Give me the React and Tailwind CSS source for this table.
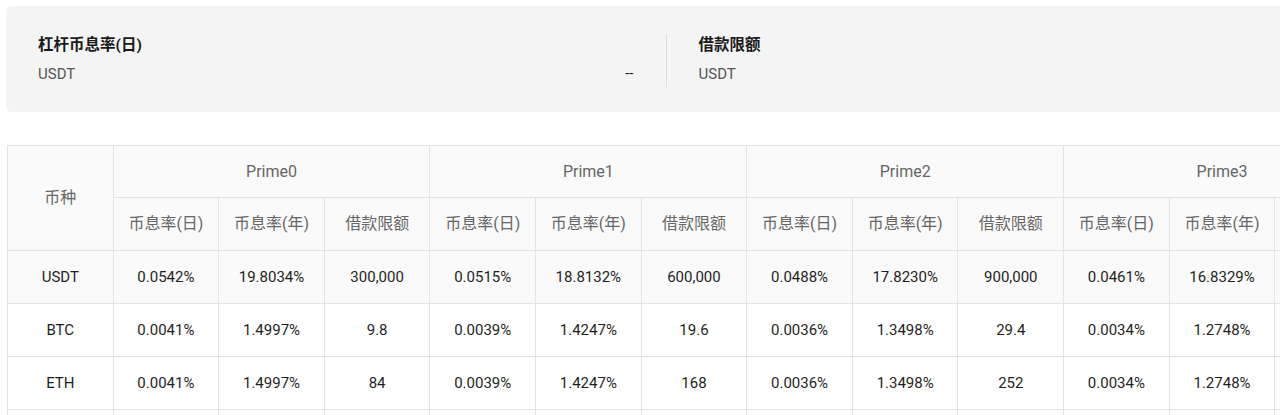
import React from "react";

const primes = [
  { name: "Prime0", rows: [["0.0542%", "19.8034%", "300,000"], ["0.0041%", "1.4997%", "9.8"], ["0.0041%", "1.4997%", "84"], ["0.0041%", "1.4997%", "3,000"]] },
  { name: "Prime1", rows: [["0.0515%", "18.8132%", "600,000"], ["0.0039%", "1.4247%", "19.6"], ["0.0039%", "1.4247%", "168"], ["0.0039%", "1.4247%", "6,000"]] },
  { name: "Prime2", rows: [["0.0488%", "17.8230%", "900,000"], ["0.0036%", "1.3498%", "29.4"], ["0.0036%", "1.3498%", "252"], ["0.0036%", "1.3498%", "9,000"]] },
  { name: "Prime3", rows: [["0.0461%", "16.8329%", "1,200,000"], ["0.0034%", "1.2748%", "39.2"], ["0.0034%", "1.2748%", "336"], ["0.0034%", "1.2748%", "12,000"]] },
];

const coins = ["USDT", "BTC", "ETH", "USDC"];

const App = () => {
  return (
    <div
      className="w-[1280px] h-[415px] overflow-hidden bg-white"
      style={{ fontFamily: 'Roboto, "Noto Sans CJK SC", sans-serif' }}
    >
      {/* summary box */}
      <div className="ml-[6px] mt-[6px] w-[1320px] h-[106px] bg-[#f4f4f4] rounded-md flex items-center px-8">
        <div className="flex-1 flex items-end">
          <div className="flex-1">
            <div className="text-[15.5px] leading-5 font-bold text-[#1a1a1a]">杠杆币息率(日)</div>
            <div className="text-[15px] leading-5 text-[#555] mt-[9px]">USDT</div>
          </div>
          <div className="text-[15px] leading-5 text-[#222] pb-[1px]">--</div>
        </div>
        <div className="w-px h-[53px] bg-[#dcdcdc] mx-8 self-center mt-[2px]" />
        <div className="flex-1">
          <div className="text-[15.5px] leading-5 font-bold text-[#1a1a1a]">借款限额</div>
          <div className="text-[15px] leading-5 text-[#555] mt-[9px]">USDT</div>
        </div>
      </div>

      {/* rate table */}
      <div className="ml-[7px] mt-[33px]">
        <table className="table-fixed w-[1374px] border-collapse text-[15px] text-center">
          <thead className="bg-[#fafafa] text-[#666] text-[16px]">
            <tr className="h-[52px]">
              <th rowSpan={2} className="font-normal border border-[#e3e3e3]">币种</th>
              {primes.map((p) => (
                <th key={p.name} colSpan={3} className="font-normal border border-[#e3e3e3]">
                  {p.name}
                </th>
              ))}
            </tr>
            <tr className="h-[53px]">
              {primes.map((p) => (
                <React.Fragment key={p.name}>
                  <th className="font-normal border border-[#e3e3e3]">币息率(日)</th>
                  <th className="font-normal border border-[#e3e3e3]">币息率(年)</th>
                  <th className="font-normal border border-[#e3e3e3]">借款限额</th>
                </React.Fragment>
              ))}
            </tr>
          </thead>
          <tbody className="text-[#1f1f1f]">
            {coins.map((c, i) => (
              <tr key={c} className={`h-[53px] ${i === 0 ? "bg-[#fafafa]" : "bg-white"}`}>
                <td className="border border-[#e3e3e3]">{c}</td>
                {primes.map((p) =>
                  p.rows[i].map((v, j) => (
                    <td key={p.name + j} className="border border-[#e3e3e3]">{v}</td>
                  ))
                )}
              </tr>
            ))}
          </tbody>
        </table>
      </div>
    </div>
  );
};

export default App;
